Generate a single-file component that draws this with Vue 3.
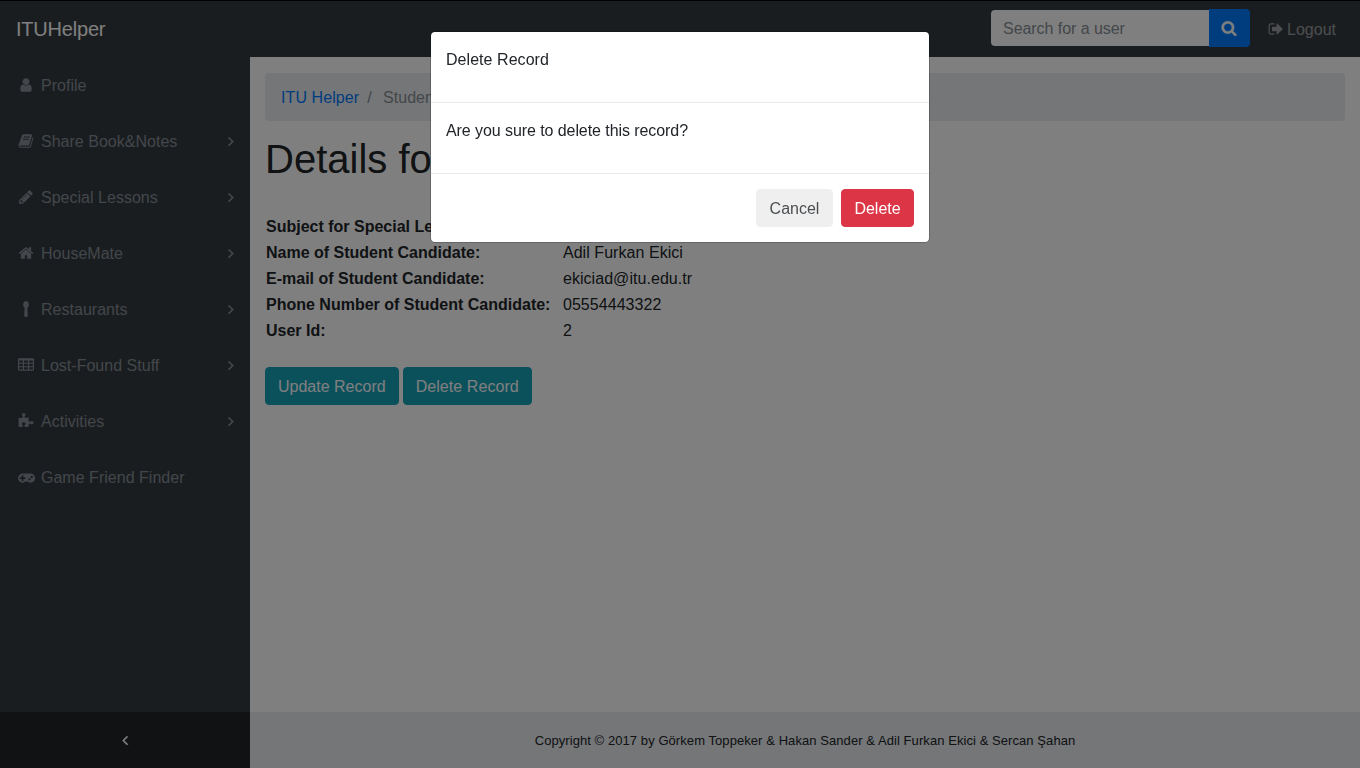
<script setup>
const icons = {
  user: 'M1536 1399q0 109-62.5 187t-150.5 78h-854q-88 0-150.5-78t-62.5-187q0-85 8.5-160.5t31.5-152 58.5-131 94-89 134.5-34.5q131 128 313 128t313-128q76 0 134.5 34.5t94 89 58.5 131 31.5 152 8.5 160.5zm-256-887q0 159-112.5 271.5t-271.5 112.5-271.5-112.5-112.5-271.5 112.5-271.5 271.5-112.5 271.5 112.5 112.5 271.5z',
  book: 'M1703 478q40 57 18 129l-275 906q-19 64-76.5 107.5t-122.5 43.5h-923q-77 0-148.5-53.5t-99.5-131.5q-24-67-2-127 0-4 3-27t4-37q1-8-3-21.5t-3-19.5q2-11 8-21t16.5-23.5 16.5-23.5q23-38 45-91.5t30-91.5q3-10 .5-30t-.5-28q3-11 17-28t17-23q21-36 42-92t25-90q1-9-2.5-32t.5-28q4-13 22-30.5t22-22.5q19-26 42.5-84.5t27.5-96.5q1-8-3-25.5t-2-26.5q2-8 9-18t18-23 17-21q8-12 16.5-30.5t15-35 16-36 19.5-32 26.5-23.5 36-11.5 47.5 5.5l-1 3q38-9 51-9h761q74 0 114 56t18 130l-274 906q-36 119-71.5 153.5t-128.5 34.5h-869q-27 0-38 15-11 16-1 43 24 70 144 70h923q29 0 56-15.5t35-41.5l300-987q7-22 5-57 38 15 59 43zm-1064 2q-4 13 2 22.5t20 9.5h608q13 0 25.5-9.5t16.5-22.5l21-64q4-13-2-22.5t-20-9.5h-608q-13 0-25.5 9.5t-16.5 22.5zm-83 256q-4 13 2 22.5t20 9.5h608q13 0 25.5-9.5t16.5-22.5l21-64q4-13-2-22.5t-20-9.5h-608q-13 0-25.5 9.5t-16.5 22.5z',
  pencil: 'M491 1536l91-91-235-235-91 91v107h128v128h107zm523-928q0-22-22-22-10 0-17 7l-542 542q-7 7-7 17 0 22 22 22 10 0 17-7l542-542q7-7 7-17zm-54-192l416 416-832 832h-416v-416zm683 96q0 53-37 90l-166 166-416-416 166-165q36-38 90-38 53 0 91 38l235 234q37 39 37 91z',
  home: 'M1472 992v480q0 26-19 45t-45 19h-384v-384h-256v384h-384q-26 0-45-19t-19-45v-480q0-1 .5-3t.5-3l575-474 575 474q1 2 1 6zm223-69l-62 74q-8 9-21 11h-3q-13 0-21-7l-692-577-692 577q-12 8-24 7-13-2-21-11l-62-74q-8-10-7-23.5t11-21.5l719-599q32-26 76-26t76 26l244 204v-195q0-14 9-23t23-9h192q14 0 23 9t9 23v408l219 182q10 8 11 21.5t-7 23.5z',
  spoon: 'M1216 404q0 117-46 200.5t-122 115.5l48 884q4 76-48 132t-128 56h-48q-76 0-128-56t-48-132l48-884q-76-32-122-115.5t-46-200.5q0-100 42-194t116-152 162-58 162 58 116 152 42 194z',
  table: 'M160 128h1472q66 0 113 47t47 113v1088q0 66-47 113t-113 47h-1472q-66 0-113-47t-47-113v-1088q0-66 47-113t113-47zM160 384q-32 0-32 32v192q0 32 32 32h352q32 0 32-32v-192q0-32-32-32zM704 384q-32 0-32 32v192q0 32 32 32h384q32 0 32-32v-192q0-32-32-32zM1280 384q-32 0-32 32v192q0 32 32 32h352q32 0 32-32v-192q0-32-32-32zM160 768q-32 0-32 32v192q0 32 32 32h352q32 0 32-32v-192q0-32-32-32zM704 768q-32 0-32 32v192q0 32 32 32h384q32 0 32-32v-192q0-32-32-32zM1280 768q-32 0-32 32v192q0 32 32 32h352q32 0 32-32v-192q0-32-32-32zM160 1152q-32 0-32 32v192q0 32 32 32h352q32 0 32-32v-192q0-32-32-32zM704 1152q-32 0-32 32v192q0 32 32 32h384q32 0 32-32v-192q0-32-32-32zM1280 1152q-32 0-32 32v192q0 32 32 32h352q32 0 32-32v-192q0-32-32-32z',
  puzzle: 'M1728 1098q0 81-44.5 135t-123.5 54q-41 0-77.5-17.5t-59-38-56.5-38-71-17.5q-110 0-110 124 0 39 16 115t15 115v5q-22 0-33 1-34 3-97.5 11.5t-115.5 13.5-98 5q-61 0-103-26.5t-42-83.5q0-37 17.5-71t38-56.5 38-59 17.5-77.5q0-79-54-123.5t-135-44.5q-84 0-143 45.5t-59 127.5q0 43 15 83t33.5 64.5 33.5 53 15 50.5q0 45-46 89-37 35-117 35-95 0-245-24-9-2-27.5-4t-27.5-4l-13-2q-1 0-3-1-2 0-2-1v-1024q2 1 17.5 3.5t34 5 21.5 3.5q150 24 245 24 80 0 117-35 46-44 46-89 0-22-15-50.5t-33.5-53-33.5-64.5-15-83q0-82 59-127.5t144-45.5q80 0 134 44.5t54 123.5q0 41-17.5 77.5t-38 59-38 56.5-17.5 71q0 57 42 83.5t103 26.5q64 0 180-15t163-17v2q-1 2-3.5 17.5t-5 34-3.5 21.5q-24 150-24 245 0 80 35 117 44 46 89 46 22 0 50.5-15t53-33.5 64.5-33.5 83-15q82 0 127.5 59t45.5 143z',
  gamepad: 'M832 1088v-128q0-14-9-23t-23-9h-192v-192q0-14-9-23t-23-9h-128q-14 0-23 9t-9 23v192h-192q-14 0-23 9t-9 23v128q0 14 9 23t23 9h192v192q0 14 9 23t23 9h128q14 0 23-9t9-23v-192h192q14 0 23-9t9-23zm576 64q0-53-37.5-90.5t-90.5-37.5-90.5 37.5-37.5 90.5 37.5 90.5 90.5 37.5 90.5-37.5 37.5-90.5zm256-256q0-53-37.5-90.5t-90.5-37.5-90.5 37.5-37.5 90.5 37.5 90.5 90.5 37.5 90.5-37.5 37.5-90.5zm256 128q0 212-150 362t-362 150q-192 0-338-128h-220q-146 128-338 128-212 0-362-150t-150-362 150-362 362-150h896q212 0 362 150t150 362z',
  search: 'M1216 832q0-185-131.5-316.5t-316.5-131.5-316.5 131.5-131.5 316.5 131.5 316.5 316.5 131.5 316.5-131.5 131.5-316.5zm512 832q0 52-38 90t-90 38q-54 0-90-38l-343-342q-179 124-399 124-143 0-273.5-55.5t-225-150-150-225-55.5-273.5 55.5-273.5 150-225 225-150 273.5-55.5 273.5 55.5 225 150 150 225 55.5 273.5q0 220-124 399l343 343q37 37 37 90z',
  signOut: 'M704 1440q0 4 1 20t.5 26.5-3 23.5-10 19.5-20.5 6.5h-320q-119 0-203.5-84.5t-84.5-203.5v-704q0-119 84.5-203.5t203.5-84.5h320q13 0 22.5 9.5t9.5 22.5q0 4 1 20t.5 26.5-3 23.5-10 19.5-20.5 6.5h-320q-66 0-113 47t-47 113v704q0 66 47 113t113 47h312l11.5 1 11.5 3 8 5.5 7 9 2 13.5zm928-544q0 26-19 45l-544 544q-19 19-45 19t-45-19-19-45v-288h-448q-26 0-45-19t-19-45v-384q0-26 19-45t45-19h448v-288q0-26 19-45t45-19 45 19l544 544q19 19 19 45z',
  right: 'M1171 960q0 13-10 23l-466 466q-10 10-23 10t-23-10l-50-50q-10-10-10-23t10-23l393-393-393-393q-10-10-10-23t10-23l50-50q10-10 23-10t23 10l466 466q10 10 10 23z',
  left: 'M1203 544q0 13-10 23l-393 393 393 393q10 10 10 23t-10 23l-50 50q-10 10-23 10t-23-10l-466-466q-10-10-10-23t10-23l466-466q10-10 23-10t23 10l50 50q10 10 10 23z'
}

const menu = [
  { icon: 'user', label: 'Profile' },
  { icon: 'book', label: 'Share Book&Notes', sub: true },
  { icon: 'pencil', label: 'Special Lessons', sub: true },
  { icon: 'home', label: 'HouseMate', sub: true },
  { icon: 'spoon', label: 'Restaurants', sub: true },
  { icon: 'table', label: 'Lost-Found Stuff', sub: true },
  { icon: 'puzzle', label: 'Activities', sub: true },
  { icon: 'gamepad', label: 'Game Friend Finder' }
]

const rows = [
  ['Subject for Special Lesson:', ''],
  ['Name of Student Candidate:', 'Adil Furkan Ekici'],
  ['E-mail of Student Candidate:', 'ekiciad@itu.edu.tr'],
  ['Phone Number of Student Candidate:', '05554443322'],
  ['User Id:', '2']
]
</script>

<template>
  <div class="page">
    <header class="navbar">
      <a class="brand">ITUHelper</a>
      <form class="search">
        <input type="text" placeholder="Search for a user" />
        <button type="button" aria-label="Search">
          <svg class="icon" viewBox="0 0 1792 1792"><path :d="icons.search" /></svg>
        </button>
      </form>
      <a class="logout">
        <svg class="icon" viewBox="0 0 1792 1792"><path :d="icons.signOut" /></svg>
        <span>Logout</span>
      </a>
    </header>

    <div class="columns">
      <aside class="sidebar">
        <nav class="menu">
          <a v-for="item in menu" :key="item.label" class="item">
            <span class="slot">
              <svg
                class="icon"
                :class="{ wide: item.icon === 'gamepad' }"
                :viewBox="item.icon === 'gamepad' ? '0 0 1920 1792' : '0 0 1792 1792'"
              ><path :d="icons[item.icon]" fill-rule="evenodd" /></svg>
            </span>
            <span class="label">{{ item.label }}</span>
            <svg v-if="item.sub" class="icon angle" viewBox="0 0 1792 1792"><path :d="icons.right" /></svg>
          </a>
        </nav>
        <a class="toggler">
          <svg class="icon angle" viewBox="0 0 1792 1792"><path :d="icons.left" /></svg>
        </a>
      </aside>

      <div class="content">
        <main>
          <ol class="breadcrumb">
            <li><a>ITU Helper</a></li>
            <li class="sep">/</li>
            <li class="current">Student</li>
          </ol>
          <h1>Details for</h1>
          <table>
            <tbody>
              <tr v-for="row in rows" :key="row[0]">
                <th>{{ row[0] }}</th>
                <td>{{ row[1] }}</td>
              </tr>
            </tbody>
          </table>
          <div class="actions">
            <button class="btn info" type="button">Update Record</button>
            <button class="btn info second" type="button">Delete Record</button>
          </div>
        </main>
        <footer>Copyright © 2017 by Görkem Toppeker &amp; Hakan Sander &amp; Adil Furkan Ekici &amp; Sercan Şahan</footer>
      </div>
    </div>

    <div class="backdrop">
      <div class="modal" role="dialog">
        <div class="modal-header"><p>Delete Record</p></div>
        <div class="modal-body"><p>Are you sure to delete this record?</p></div>
        <div class="modal-footer">
          <button class="btn plain" type="button">Cancel</button>
          <button class="btn danger" type="button">Delete</button>
        </div>
      </div>
    </div>
  </div>
</template>

<style>
body {
  margin: 0;
  overflow: hidden;
}
</style>

<style scoped>
.page,
.page * {
  box-sizing: border-box;
}
.page {
  height: 100vh;
  display: flex;
  flex-direction: column;
  border-top: 1px solid #000;
  background: #fff;
  color: #212529;
  font: 16px/24px "Liberation Sans", Arial, sans-serif;
}
.icon {
  display: block;
  width: 16px;
  height: 16px;
  flex: none;
  fill: currentColor;
}
.icon.wide {
  width: 17.14px;
}
.icon.angle {
  stroke: currentColor;
  stroke-width: 60;
}
.navbar {
  height: 56px;
  flex: none;
  display: flex;
  align-items: center;
  padding: 0 24px 0 16px;
  background: #343a40;
}
.brand {
  font-size: 20px;
  line-height: 30px;
  letter-spacing: -0.2px;
  color: #fff;
}
.search {
  display: flex;
  align-items: center;
  margin: 0 18px 2px auto;
}
.search input {
  width: 218px;
  height: 36px;
  margin: 0;
  padding: 2px 12px 0;
  border: 0;
  border-radius: 4px 0 0 4px;
  background: #fff;
  font: inherit;
  letter-spacing: -0.06px;
}
.search input::placeholder {
  color: #868e96;
  opacity: 1;
}
.search button {
  width: 41px;
  height: 38px;
  display: flex;
  align-items: center;
  justify-content: center;
  padding: 0 1px 0 0;
  border: 0;
  border-radius: 0 4px 4px 0;
  background: #007bff;
  color: #fff;
}
.search .icon {
  stroke: currentColor;
  stroke-width: 50;
}
.logout {
  display: flex;
  align-items: center;
  gap: 3px;
  color: rgba(255, 255, 255, 0.5);
}
.logout span {
  padding-top: 2px;
}
.columns {
  flex: 1;
  display: flex;
  min-height: 0;
}
.sidebar {
  width: 250px;
  flex: none;
  display: flex;
  flex-direction: column;
  background: #343a40;
  color: #868e96;
}
.menu {
  flex: 1;
}
.item {
  height: 56px;
  display: flex;
  align-items: center;
  padding: 0 11px 0 16px;
}
.slot {
  width: 20.6px;
  margin-right: 4.4px;
  display: flex;
  justify-content: center;
}
.label {
  flex: 1;
  padding-top: 2px;
  letter-spacing: 0.02px;
}
.toggler {
  height: 56px;
  display: flex;
  align-items: center;
  justify-content: center;
  background: #212529;
  color: #fff;
}
.content {
  flex: 1;
  display: flex;
  flex-direction: column;
}
main {
  flex: 1;
  padding: 16px 15px 0;
}
.breadcrumb {
  display: flex;
  margin: 0 0 16px;
  padding: 13px 16px 11px;
  border-radius: 4px;
  background: #e9ecef;
  list-style: none;
}
.breadcrumb a {
  color: #007bff;
  letter-spacing: 0.08px;
}
.sep {
  padding: 0 11.5px 0 8px;
  color: #868e96;
}
.current {
  color: #868e96;
}
h1 {
  margin: 0 0 32px;
  font-size: 40px;
  line-height: 44px;
  font-weight: 400;
}
table {
  border-collapse: collapse;
}
th,
td {
  padding: 2px 1px 0;
  height: 26px;
  text-align: left;
}
th {
  padding-right: 11.5px;
}
td {
  letter-spacing: 0.05px;
}
.actions {
  display: flex;
  gap: 4px;
  margin-top: 24px;
}
.btn {
  height: 38px;
  padding: 7px 12px 5px;
  border: 1px solid transparent;
  border-radius: 4px;
  font: inherit;
}
.info {
  background: #17a2b8;
  border-color: #17a2b8;
  color: #fff;
}
.second {
  letter-spacing: 0.07px;
}
footer {
  height: 56px;
  background: #e9ecef;
  font-size: 13px;
  line-height: 58px;
  letter-spacing: 0.07px;
  text-align: center;
}
.backdrop {
  position: fixed;
  inset: 0;
  display: flex;
  align-items: flex-start;
  justify-content: center;
  padding-top: 31px;
  background: rgba(0, 0, 0, 0.5);
}
.modal {
  width: 500px;
  border: 1px solid rgba(0, 0, 0, 0.2);
  border-radius: 5px;
  background: #fff;
  background-clip: padding-box;
}
.modal p {
  margin: 0 0 15px;
  padding-top: 1px;
}
.modal-header {
  padding: 15px;
  border-bottom: 1px solid #e9ecef;
  letter-spacing: 0.05px;
}
.modal-body {
  padding: 15px;
  letter-spacing: -0.075px;
}
.modal-footer {
  display: flex;
  justify-content: flex-end;
  gap: 8px;
  padding: 15px;
  border-top: 1px solid #e9ecef;
}
.plain {
  width: 77px;
  background: #efefef;
  border-color: #efefef;
  color: #4b4f52;
}
.danger {
  width: 73px;
  background: #dc3545;
  border-color: #dc3545;
  color: #fff;
}
</style>
